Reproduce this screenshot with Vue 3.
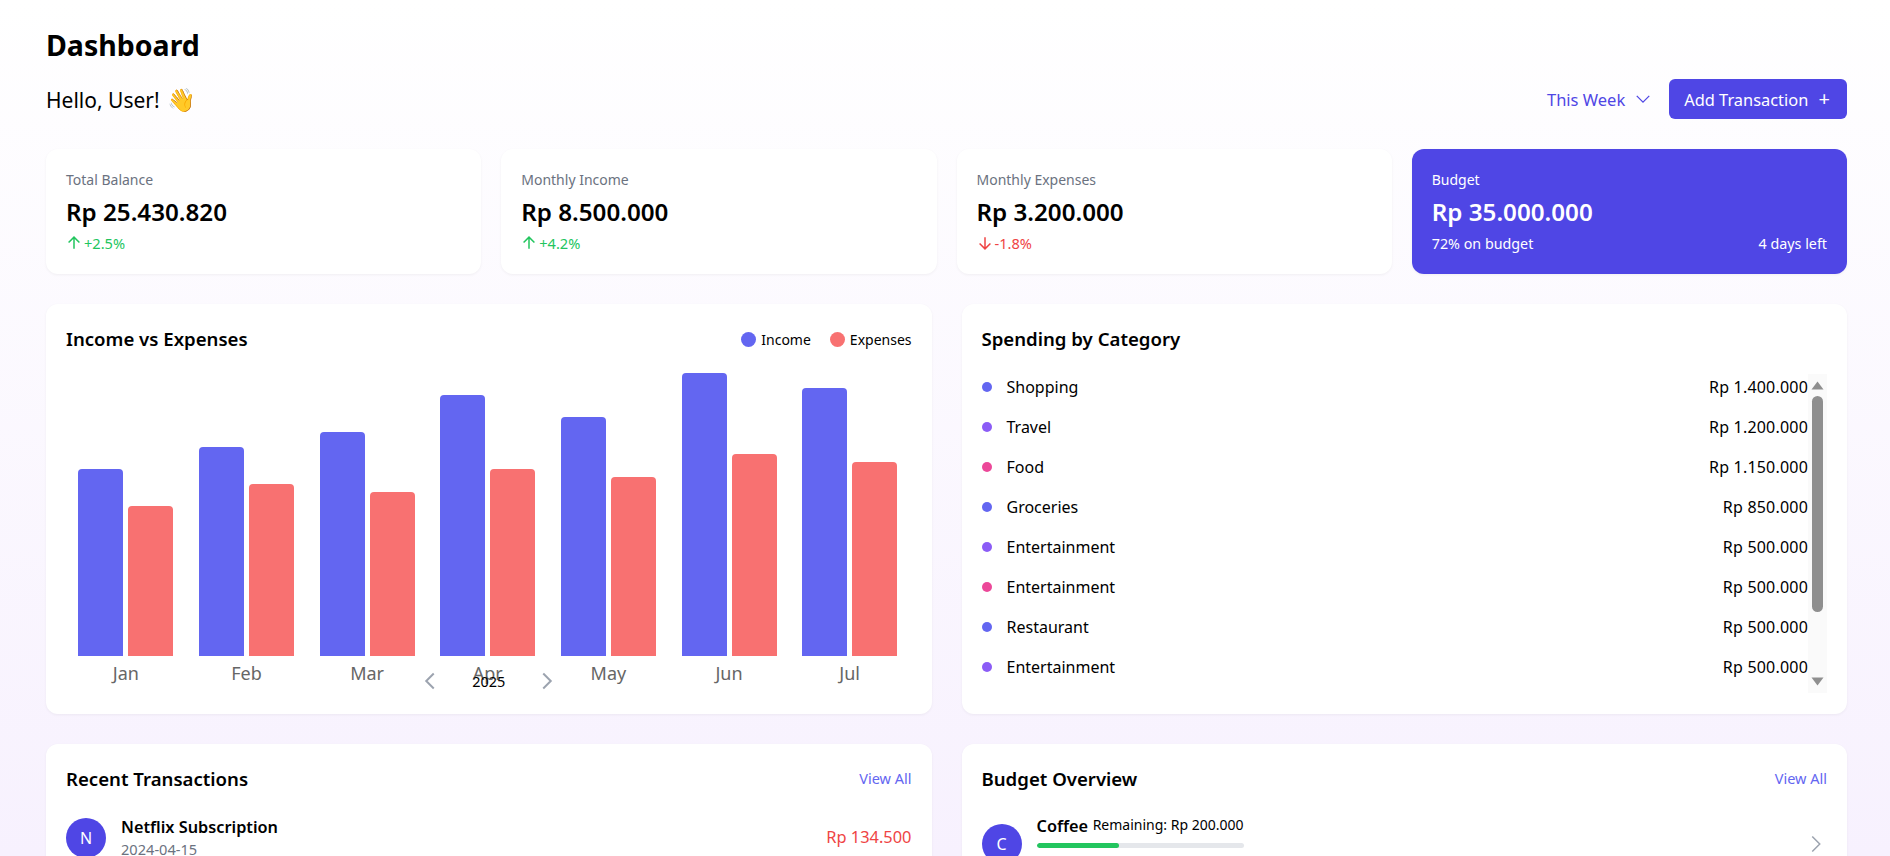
<script setup>
const stats = [
  { label: 'Total Balance', value: 'Rp 25.430.820', delta: '+2.5%', up: true },
  { label: 'Monthly Income', value: 'Rp 8.500.000', delta: '+4.2%', up: true },
  { label: 'Monthly Expenses', value: 'Rp 3.200.000', delta: '-1.8%', up: false }
]

const months = [
  { name: 'Jan', income: 187, expenses: 150 },
  { name: 'Feb', income: 209, expenses: 172 },
  { name: 'Mar', income: 224, expenses: 164 },
  { name: 'Apr', income: 261, expenses: 187 },
  { name: 'May', income: 239, expenses: 179 },
  { name: 'Jun', income: 283, expenses: 202 },
  { name: 'Jul', income: 268, expenses: 194 }
]

const categories = [
  { name: 'Shopping', amount: 'Rp 1.400.000', color: '#6366f1' },
  { name: 'Travel', amount: 'Rp 1.200.000', color: '#8b5cf6' },
  { name: 'Food', amount: 'Rp 1.150.000', color: '#ec4899' },
  { name: 'Groceries', amount: 'Rp 850.000', color: '#6366f1' },
  { name: 'Entertainment', amount: 'Rp 500.000', color: '#8b5cf6' },
  { name: 'Entertainment', amount: 'Rp 500.000', color: '#ec4899' },
  { name: 'Restaurant', amount: 'Rp 500.000', color: '#6366f1' },
  { name: 'Entertainment', amount: 'Rp 500.000', color: '#8b5cf6' }
]
</script>

<template>
  <div class="page">
    <h1>Dashboard</h1>

    <div class="topbar">
      <div class="hello">Hello, User! <span class="wave">👋</span></div>
      <div class="controls">
        <div class="range">
          <span class="range-text">This Week</span>
          <svg width="20" height="20" viewBox="0 0 24 24" fill="none" stroke="currentColor" stroke-width="1.5"><path d="M19.5 8.25l-7.5 7.5-7.5-7.5" /></svg>
        </div>
        <button class="add-btn">Add Transaction <span class="plus">+</span></button>
      </div>
    </div>

    <div class="stats">
      <div v-for="s in stats" :key="s.label" class="stat">
        <div class="stat-label">{{ s.label }}</div>
        <div class="stat-value">{{ s.value }}</div>
        <div class="stat-delta" :class="s.up ? 'up' : 'down'">
          <svg width="20" height="20" viewBox="0 0 24 24" fill="none" stroke="currentColor" stroke-width="1.8">
            <path v-if="s.up" d="M12 19V5M5.5 11.5L12 5l6.5 6.5" />
            <path v-else d="M12 5v14M5.5 12.5L12 19l6.5-6.5" />
          </svg>
          {{ s.delta }}
        </div>
      </div>
      <div class="stat budget">
        <div class="stat-label">Budget</div>
        <div class="stat-value">Rp 35.000.000</div>
        <div class="stat-foot">
          <span>72% on budget</span>
          <span>4 days left</span>
        </div>
      </div>
    </div>

    <div class="grid">
      <section class="card">
        <div class="card-head">
          <h3>Income vs Expenses</h3>
          <div class="legend">
            <span class="legend-item"><i class="income"></i>Income</span>
            <span class="legend-item"><i class="expenses"></i>Expenses</span>
          </div>
        </div>
        <div class="chart">
          <div v-for="m in months" :key="m.name" class="month">
            <div class="bars">
              <div class="bar income" :style="{ height: m.income + 'px' }"></div>
              <div class="bar expenses" :style="{ height: m.expenses + 'px' }"></div>
            </div>
            <div class="month-name">{{ m.name }}</div>
          </div>
        </div>
        <div class="pager">
          <svg width="24" height="24" viewBox="0 0 24 24" fill="none" stroke="#9ca3af" stroke-width="2"><path d="M15.75 19.5L8.25 12l7.5-7.5" /></svg>
          <span class="year">2025</span>
          <svg width="24" height="24" viewBox="0 0 24 24" fill="none" stroke="#9ca3af" stroke-width="2"><path d="M8.25 4.5l7.5 7.5-7.5 7.5" /></svg>
        </div>
      </section>

      <section class="card">
        <div class="card-head">
          <h3>Spending by Category</h3>
        </div>
        <div class="spending">
          <ul class="cat-list">
            <li v-for="(c, i) in categories" :key="i" class="cat-row">
              <span class="cat-dot" :style="{ background: c.color }"></span>
              <span class="cat-name">{{ c.name }}</span>
              <span class="cat-amount">{{ c.amount }}</span>
            </li>
          </ul>
          <div class="rail">
            <svg class="arrow" width="13" height="9" viewBox="0 0 13 9"><path d="M6.5 0.5L12.5 8.5H0.5Z" fill="#8f8f8f" /></svg>
            <div class="thumb"></div>
            <svg class="arrow arrow-down" width="13" height="9" viewBox="0 0 13 9"><path d="M0.5 0.5H12.5L6.5 8.5Z" fill="#8f8f8f" /></svg>
          </div>
        </div>
      </section>

      <section class="card">
        <div class="card-head">
          <h3>Recent Transactions</h3>
          <a class="view-all">View All</a>
        </div>
        <div class="tx-row">
          <div class="avatar">N</div>
          <div class="tx-info">
            <div class="tx-name">Netflix Subscription</div>
            <div class="tx-date">2024-04-15</div>
          </div>
          <div class="tx-amount">Rp 134.500</div>
        </div>
      </section>

      <section class="card">
        <div class="card-head">
          <h3>Budget Overview</h3>
          <a class="view-all">View All</a>
        </div>
        <div class="budget-row">
          <div class="avatar">C</div>
          <div class="budget-info">
            <div class="budget-top">
              <span class="tx-name">Coffee</span>
              <span class="remaining">Remaining: Rp 200.000</span>
            </div>
            <div class="progress"><div class="progress-fill" :style="{ width: '40%' }"></div></div>
          </div>
          <svg class="row-chevron" width="24" height="24" viewBox="0 0 24 24" fill="none" stroke="#9ca3af" stroke-width="1.5"><path d="M8.25 4.5l7.5 7.5-7.5 7.5" /></svg>
        </div>
      </section>
    </div>
  </div>
</template>

<style scoped>
.page {
  padding: 24px 43px 40px 46px;
  height: 856px;
  box-sizing: border-box;
  overflow: hidden;
  background: linear-gradient(180deg, #ffffff 0%, #f7f1fe 100%);
  font-family: "Noto Sans", "Open Sans", sans-serif;
  line-height: 1.5;
  color: #000;
}
h1 { margin: 0; font-size: 28.5px; line-height: 42px; font-weight: 700; }
h3 { margin: 0; font-size: 18.6px; line-height: 28px; font-weight: 600; }

.topbar { display: flex; justify-content: space-between; align-items: center; margin-top: 13px; height: 40px; }
.hello { font-size: 21px; padding-top: 1px; }
.wave { margin-left: 2px; font-size: 23px; }
.controls { display: flex; align-items: center; gap: 16px; }
.range { display: flex; align-items: center; gap: 8px; font-size: 16.5px; color: #4f46e5; }
.range-text { padding-top: 2px; }
.add-btn { height: 40px; padding: 2px 17px 0 15px; border: none; border-radius: 6px; background: #4f46e5; color: #fff; font: inherit; font-size: 16.4px; }
.plus { margin-left: 6px; font-size: 20px; line-height: 1; }

.stats { display: grid; grid-template-columns: repeat(4, 1fr); gap: 20px; margin-top: 30px; }
.stat { height: 125px; box-sizing: border-box; padding: 20px; background: #fff; border-radius: 12px; box-shadow: 0 1px 3px rgba(0, 0, 0, 0.05); }
.stat-label { font-size: 14px; line-height: 21px; color: #6b7280; }
.stat-value { margin-top: 6px; font-size: 24.2px; line-height: 32px; font-weight: 600; }
.stat-delta { display: flex; align-items: center; margin-top: 5px; font-size: 14.6px; line-height: 20px; }
.stat-delta svg { margin-left: -2px; }
.up { color: #22c55e; }
.down { color: #ef4444; }
.budget { background: #4f46e5; color: #fff; }
.budget .stat-label { color: #fff; }
.stat-foot { display: flex; justify-content: space-between; margin-top: 6px; font-size: 14.3px; line-height: 20px; }

.grid { display: grid; grid-template-columns: 1fr 1fr; gap: 30px; margin-top: 30px; }
.card { position: relative; min-height: 410px; box-sizing: border-box; padding: 21px 20px 20px; background: #fff; border-radius: 12px; box-shadow: 0 1px 3px rgba(0, 0, 0, 0.05); }
.card-head { display: flex; justify-content: space-between; align-items: center; height: 28px; }

.legend { display: flex; gap: 19px; font-size: 14px; }
.legend-item { display: flex; align-items: center; gap: 5px; }
.legend-item i { width: 15px; height: 15px; border-radius: 50%; }
i.income { background: #6366f1; }
i.expenses { background: #f87171; }

.chart { display: grid; grid-template-columns: repeat(7, 1fr); margin: 20px 1.5px 0 -0.5px; }
.month { display: flex; flex-direction: column; align-items: center; }
.bars { display: flex; align-items: flex-end; gap: 5px; height: 283px; }
.bar { width: 45px; border-radius: 4px 4px 0 0; }
.bar.income { background: #6366f1; }
.bar.expenses { background: #f87171; }
.month-name { margin-top: 4px; font-size: 18px; line-height: 27px; color: #666; }

.pager { display: flex; justify-content: center; align-items: center; gap: 30px; margin-top: -18px; position: relative; }
.year { font-size: 14.5px; line-height: 21px; }

.spending { display: flex; margin-top: 21px; height: 319px; overflow: hidden; }
.cat-list { flex: 1; list-style: none; margin: 0; padding: 0; }
.cat-row { display: flex; align-items: center; height: 25px; margin-bottom: 15px; font-size: 16px; }
.cat-dot { width: 10px; height: 10px; border-radius: 50%; margin-right: 15px; }
.cat-amount { margin-left: auto; letter-spacing: 0.2px; }
.rail { display: flex; flex-direction: column; align-items: center; width: 19px; background: #fafafa; padding-top: 7px; box-sizing: border-box; }
.thumb { width: 11px; height: 216px; margin-top: 6px; border-radius: 6px; background: #8f8f8f; }
.arrow-down { margin-top: auto; margin-bottom: 7px; }

.view-all { font-size: 14.5px; color: #6366f1; }

.tx-row { display: flex; align-items: center; margin-top: 22px; }
.avatar { display: flex; align-items: center; justify-content: center; width: 40px; height: 40px; flex-shrink: 0; border-radius: 50%; background: #4f46e5; color: #fff; font-size: 16px; }
.tx-info { margin-left: 15px; }
.tx-name { font-size: 16.3px; line-height: 24px; font-weight: 600; }
.tx-date { font-size: 14.6px; line-height: 21px; color: #6b7280; }
.tx-amount { margin-left: auto; font-size: 16.4px; color: #ef4444; }

.budget-row { display: flex; align-items: center; margin-top: 21px; min-height: 60px; }
.budget-info { width: 207px; margin-left: 15px; align-self: flex-start; }
.budget-top { display: flex; justify-content: space-between; align-items: flex-start; }
.remaining { font-size: 14px; line-height: 21px; }
.progress { height: 5px; margin-top: 5px; border-radius: 3px; background: #e5e7eb; overflow: hidden; }
.progress-fill { height: 100%; background: #22c55e; border-radius: 3px; }
.row-chevron { margin-left: auto; margin-right: -1px; }
</style>

<style>
html, body { margin: 0; overflow: hidden; }
</style>
